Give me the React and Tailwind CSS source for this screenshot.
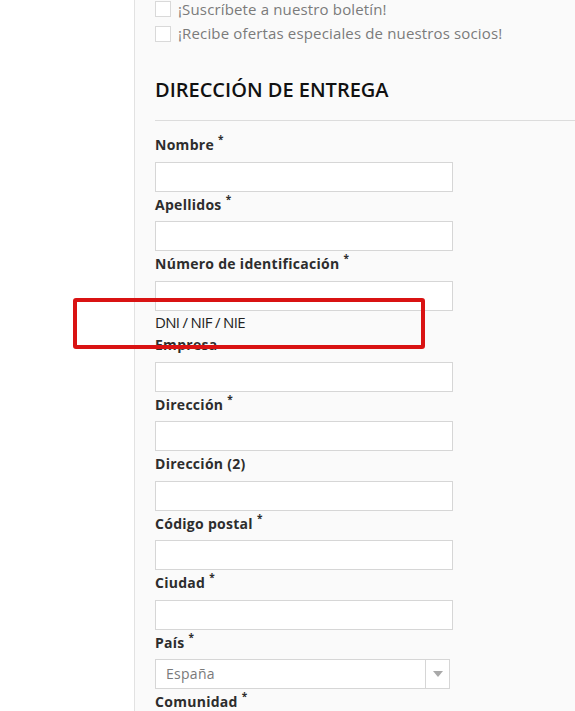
import React from 'react';

const labelFont = { fontFamily: '"Open Sans", "Liberation Sans", sans-serif' };

const fields = [
  { label: 'Nombre', required: true },
  { label: 'Apellidos', required: true },
  { label: 'Número de identificación', required: true, note: 'DNI / NIF / NIE' },
  { label: 'Empresa' },
  { label: 'Dirección', required: true },
  { label: 'Dirección (2)' },
  { label: 'Código postal', required: true },
  { label: 'Ciudad', required: true },
  { label: 'País', required: true, select: 'España' },
  { label: 'Comunidad', required: true },
];

const Label = ({ text, required }) => (
  <div className="h-[25px] leading-[25px] text-[14px] font-bold tracking-[0.02em] text-[#2d2d2d] whitespace-nowrap">
    {text}
    {required && <sup className="ml-[4px] text-[10px] font-bold relative -top-[7px]">*</sup>}
  </div>
);

const Field = ({ label, required, note, select, last }) => (
  <div>
    <Label text={label} required={required} />
    {!last && (
      select ? (
        <div className="mt-[4.5px] flex h-[30px] w-[295px] border border-[#d6d6d6] bg-white">
          <div className="flex-1 pl-[10px] leading-[28px] text-[14px] tracking-[0.02em] text-[#7a7a7a]">{select}</div>
          <div className="flex w-[24px] items-center justify-center border-l border-[#d6d6d6]">
            <svg width="10" height="6" viewBox="0 0 10 6">
              <path d="M0 0 L10 0 L5 6 Z" fill="#a9a9a9" />
            </svg>
          </div>
        </div>
      ) : (
        <div className="mt-[4.5px] h-[30px] w-[298px] border border-[#d6d6d6] bg-white" />
      )
    )}
    {note && (
      <div className="h-[21.5px] pt-[1px] leading-[20px] text-[15px] tracking-[-0.045em] text-[#222]">{note}</div>
    )}
  </div>
);

export default function App() {
  return (
    <div className="relative flex h-[711px] w-[575px] overflow-hidden bg-white" style={labelFont}>
      <div className="w-[134px] shrink-0 bg-white" />
      <div className="flex-1 border-l border-[#e2e2e2] bg-[#fafafa] pl-[20px]">
        {/* newsletter options */}
        <div className="pt-[1px] text-[15px] tracking-[0.01em] text-[#7b7b7b]">
          <label className="flex h-[25px] items-start gap-[7px]">
            <span className="h-[16px] w-[16px] shrink-0 border border-[#d9d9d9] bg-white" />
            <span className="-mt-[1px] leading-[18px]">¡Suscríbete a nuestro boletín!</span>
          </label>
          <label className="flex h-[16px] items-start gap-[7px]">
            <span className="h-[16px] w-[16px] shrink-0 border border-[#d9d9d9] bg-white" />
            <span className="-mt-[2px] leading-[18px]">¡Recibe ofertas especiales de nuestros socios!</span>
          </label>
        </div>

        <h2 className="mt-[33.5px] h-[28px] leading-[28px] text-[20px] font-semibold text-[#111]">
          DIRECCIÓN DE ENTREGA
        </h2>
        <div className="mt-[16.5px] h-px bg-[#dcdcdc]" />

        <div className="mt-[11px]">
          {fields.map((f, i) => (
            <Field key={f.label} {...f} last={i === fields.length - 1} />
          ))}
        </div>
      </div>

      {/* highlight annotation */}
      <div className="pointer-events-none absolute left-[73px] top-[298px] h-[51px] w-[352px] rounded-[3px] border-[4px] border-[#d91313]" />
    </div>
  );
}
